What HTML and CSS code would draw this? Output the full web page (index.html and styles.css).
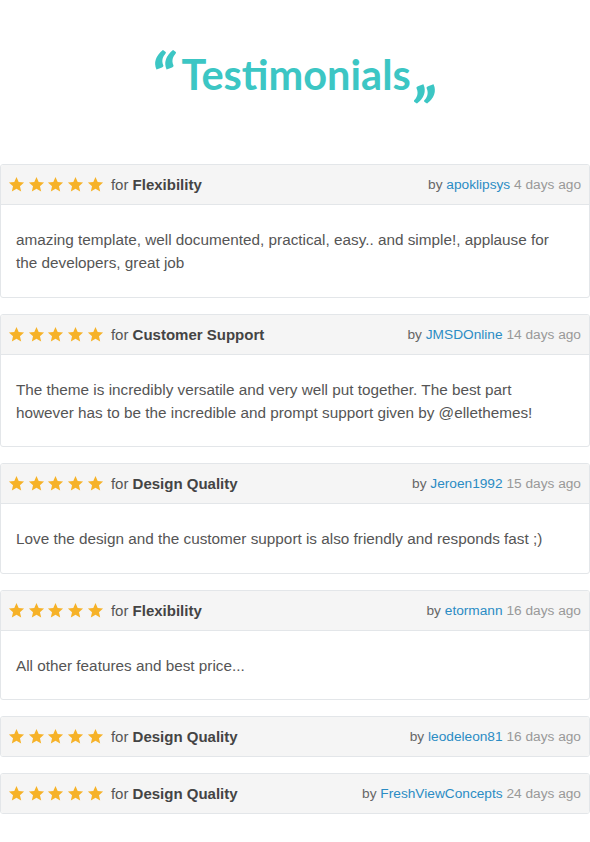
FILE: index.html
```html
<!DOCTYPE html>
<html>
<head>
<meta charset="utf-8">
<link rel="stylesheet" href="styles.css">
</head>
<body>
<svg width="0" height="0" class="defs">
  <defs>
    <symbol id="star" viewBox="0 0 24 24"><path d="M12 1.5l3.1 7.1 7.6.7-5.8 5.1 1.7 7.5L12 18l-6.6 3.9 1.7-7.5L1.3 9.3l7.6-.7z"/></symbol>
  </defs>
</svg>
<h1 class="title"><span class="q open">&ldquo;</span><span class="word">Testimonials</span><span class="q close">&bdquo;</span></h1>

<div class="list">
  <div class="card">
    <div class="head">
      <div class="rating"><span class="stars"><svg><use href="#star"/></svg><svg><use href="#star"/></svg><svg><use href="#star"/></svg><svg><use href="#star"/></svg><svg><use href="#star"/></svg></span> for <b>Flexibility</b></div>
      <div class="by">by <a>apoklipsys</a> <span class="ago">4 days ago</span></div>
    </div>
    <div class="body">amazing template, well documented, practical, easy.. and simple!, applause for the developers, great job</div>
  </div>

  <div class="card">
    <div class="head">
      <div class="rating"><span class="stars"><svg><use href="#star"/></svg><svg><use href="#star"/></svg><svg><use href="#star"/></svg><svg><use href="#star"/></svg><svg><use href="#star"/></svg></span> for <b>Customer Support</b></div>
      <div class="by">by <a>JMSDOnline</a> <span class="ago">14 days ago</span></div>
    </div>
    <div class="body">The theme is incredibly versatile and very well put together. The best part however has to be the incredible and prompt support given by @ellethemes!</div>
  </div>

  <div class="card">
    <div class="head">
      <div class="rating"><span class="stars"><svg><use href="#star"/></svg><svg><use href="#star"/></svg><svg><use href="#star"/></svg><svg><use href="#star"/></svg><svg><use href="#star"/></svg></span> for <b>Design Quality</b></div>
      <div class="by">by <a>Jeroen1992</a> <span class="ago">15 days ago</span></div>
    </div>
    <div class="body">Love the design and the customer support is also friendly and responds fast ;)</div>
  </div>

  <div class="card">
    <div class="head">
      <div class="rating"><span class="stars"><svg><use href="#star"/></svg><svg><use href="#star"/></svg><svg><use href="#star"/></svg><svg><use href="#star"/></svg><svg><use href="#star"/></svg></span> for <b>Flexibility</b></div>
      <div class="by">by <a>etormann</a> <span class="ago">16 days ago</span></div>
    </div>
    <div class="body">All other features and best price...</div>
  </div>

  <div class="card">
    <div class="head only">
      <div class="rating"><span class="stars"><svg><use href="#star"/></svg><svg><use href="#star"/></svg><svg><use href="#star"/></svg><svg><use href="#star"/></svg><svg><use href="#star"/></svg></span> for <b>Design Quality</b></div>
      <div class="by">by <a>leodeleon81</a> <span class="ago">16 days ago</span></div>
    </div>
  </div>

  <div class="card">
    <div class="head only">
      <div class="rating"><span class="stars"><svg><use href="#star"/></svg><svg><use href="#star"/></svg><svg><use href="#star"/></svg><svg><use href="#star"/></svg><svg><use href="#star"/></svg></span> for <b>Design Quality</b></div>
      <div class="by">by <a>FreshViewConcepts</a> <span class="ago">24 days ago</span></div>
    </div>
  </div>
</div>
</body>
</html>
```

FILE: styles.css
```css
html, body {
  margin: 0;
  padding: 0;
  background: #fff;
}
body {
  font-family: "Liberation Sans", Arial, sans-serif;
  color: #555;
}
.defs {
  position: absolute;
  width: 0;
  height: 0;
}
.title {
  margin: 0;
  padding-top: 44px;
  height: 164px;
  box-sizing: border-box;
  display: flex;
  justify-content: center;
  align-items: flex-start;
  font-family: Lato, sans-serif;
  font-weight: 700;
  font-size: 41.5px;
  line-height: 60px;
  color: #3cc6c4;
}
.word {
  display: block;
}
.q {
  display: block;
  font-size: 64px;
  font-weight: 900;
  font-style: italic;
  line-height: 60px;
}
.q.open {
  margin-right: 7px;
  margin-top: 3px;
}
.q.close {
  margin-left: 5px;
  margin-top: -4px;
}
.list {
  display: flex;
  flex-direction: column;
  gap: 16px;
  width: 590px;
}
.card {
  border: 1px solid #e3e6e9;
  border-radius: 3px;
  background: #fff;
  overflow: hidden;
}
.head {
  display: flex;
  justify-content: space-between;
  align-items: center;
  height: 39px;
  padding: 0 8px 0 7px;
  background: #f5f5f5;
  border-bottom: 1px solid #e3e6e9;
}
.head.only {
  border-bottom: 0;
}
.rating {
  display: flex;
  align-items: center;
  font-size: 15px;
  color: #555;
  white-space: pre;
}
.rating b {
  color: #444;
}
.stars {
  display: inline-flex;
  gap: 2.7px;
  margin-right: 3px;
}
.stars svg {
  width: 17px;
  height: 17px;
  fill: #f6b228;
}
.by {
  font-size: 13.7px;
  color: #666;
}
.by a {
  color: #2b8cc4;
}
.ago {
  color: #999;
}
.body {
  padding: 23px 22px 22.5px 15px;
  font-size: 15.3px;
  line-height: 23px;
  color: #555;
}
```
